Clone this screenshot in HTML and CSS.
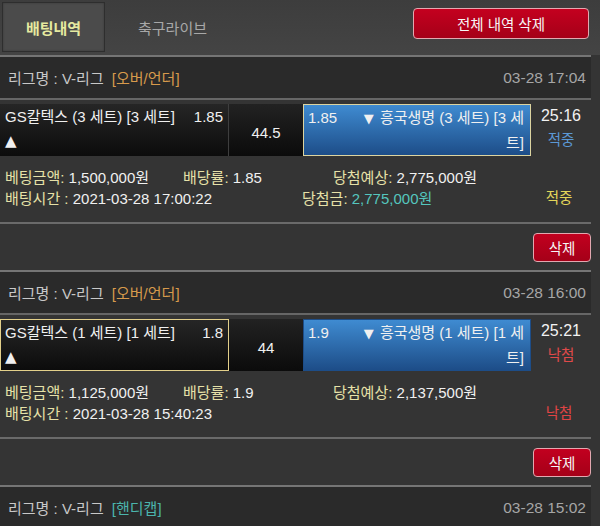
FILE: index.html
```html
<!DOCTYPE html>
<html lang="ko">
<head>
<meta charset="utf-8">
<title>배팅내역</title>
<link rel="stylesheet" href="styles.css">
</head>
<body>
<div class="page">
  <header class="top">
    <div class="tab tab-active">배팅내역</div>
    <div class="tab tab-idle">축구라이브</div>
    <button class="btn-all">전체 내역 삭제</button>
  </header>

  <div class="list">
    <section class="bet">
      <div class="league">
        <span class="league-name">리그명 : V-리그 <span class="tag tag-ou">[오버/언더]</span></span>
        <span class="date">03-28 17:04</span>
      </div>
      <div class="match">
        <div class="cell home">
          <div class="line"><span>GS칼텍스 (3 세트) [3 세트]</span><span>1.85</span></div>
          <div class="line"><span class="tri">▲</span></div>
        </div>
        <div class="cell mid">44.5</div>
        <div class="cell away pick">
          <div class="line"><span>1.85</span><span><span class="tri down">▼</span> 흥국생명 (3 세트) [3 세</span></div>
          <div class="line end"><span>트]</span></div>
        </div>
        <div class="cell status">
          <div class="time">25:16</div>
          <div class="res res-win">적중</div>
        </div>
      </div>
      <div class="info">
        <div class="row">
          <span class="c1"><b>베팅금액:</b> 1,500,000원</span>
          <span class="c2"><b>배당률:</b> 1.85</span>
          <span><b>당첨예상:</b> 2,775,000원</span>
        </div>
        <div class="row">
          <span class="c3"><b>배팅시간 :</b> 2021-03-28 17:00:22</span>
          <span><b>당첨금:</b> <span class="win-amt">2,775,000원</span></span>
          <span class="result result-win">적중</span>
        </div>
      </div>
      <div class="actions"><button class="btn-del">삭제</button></div>
    </section>

    <section class="bet">
      <div class="league">
        <span class="league-name">리그명 : V-리그 <span class="tag tag-ou">[오버/언더]</span></span>
        <span class="date">03-28 16:00</span>
      </div>
      <div class="match">
        <div class="cell home pick-sel">
          <div class="line"><span>GS칼텍스 (1 세트) [1 세트]</span><span>1.8</span></div>
          <div class="line"><span class="tri">▲</span></div>
        </div>
        <div class="cell mid">44</div>
        <div class="cell away">
          <div class="line"><span>1.9</span><span><span class="tri down">▼</span> 흥국생명 (1 세트) [1 세</span></div>
          <div class="line end"><span>트]</span></div>
        </div>
        <div class="cell status">
          <div class="time">25:21</div>
          <div class="res res-lose">낙첨</div>
        </div>
      </div>
      <div class="info">
        <div class="row">
          <span class="c1"><b>베팅금액:</b> 1,125,000원</span>
          <span class="c2"><b>배당률:</b> 1.9</span>
          <span><b>당첨예상:</b> 2,137,500원</span>
        </div>
        <div class="row">
          <span class="c3"><b>배팅시간 :</b> 2021-03-28 15:40:23</span>
          <span></span>
          <span class="result result-lose">낙첨</span>
        </div>
      </div>
      <div class="actions"><button class="btn-del">삭제</button></div>
    </section>

    <section class="bet">
      <div class="league">
        <span class="league-name">리그명 : V-리그 <span class="tag tag-hc">[핸디캡]</span></span>
        <span class="date">03-28 15:02</span>
      </div>
    </section>
  </div>
</div>
</body>
</html>
```

FILE: styles.css
```css
* { box-sizing: border-box; }
html, body {
  margin: 0;
  padding: 0;
  background: #343434;
  font-family: "Liberation Sans", "Noto Sans CJK KR", sans-serif;
  color: #f0f0f0;
  overflow: hidden;
}
.page { width: 600px; }

.top {
  height: 55px;
  display: flex;
  align-items: flex-start;
  background: linear-gradient(#3d3d3d, #444444);
}
.tab {
  height: 50px;
  display: flex;
  align-items: center;
  justify-content: center;
  font-size: 15px;
  margin-top: 2px;
}
.tab-active {
  width: 103px;
  margin-left: 2px;
  background: #4b4b4b;
  border: 1px solid #2e2e2e;
  color: #e6eaa0;
  font-weight: bold;
  box-shadow: inset 0 0 2px rgba(0,0,0,0.3);
}
.tab-idle {
  width: 135px;
  color: #a8a8a8;
}
.btn-all {
  margin-left: auto;
  margin-right: 11px;
  margin-top: 8px;
  width: 176px;
  height: 31px;
  background: linear-gradient(#c4001f, #a50018);
  border: 1px solid #e2a8b0;
  border-radius: 4px;
  color: #f6f6f6;
  font-family: inherit;
  font-size: 14.5px;
  padding: 0;
}

.list { width: 591px; }

.league {
  height: 45px;
  border-top: 2px solid #757575;
  border-bottom: 2px solid #666666;
  background: #2a2a2a;
  display: flex;
  align-items: center;
  justify-content: space-between;
  padding: 0 5px 0 8px;
  font-size: 15px;
  color: #c8c8c8;
}
.tag { margin-left: 4px; }
.tag-ou { color: #d79a4c; }
.tag-hc { color: #4bb5ad; }
.date { font-size: 15.5px; color: #a6a6a6; }

.match {
  display: flex;
  padding-top: 4px;
  height: 57px;
  font-size: 15px;
}
.cell { height: 52px; }
.home {
  width: 229px;
  padding: 0 5px;
  background: linear-gradient(#262626, #0c0c0c);
  border-right: 1px solid #3e3e3e;
}
.pick-sel { border: 1px solid #e3d08a; padding: 0 5px 0 4px; }
.mid {
  width: 74px;
  background: linear-gradient(#222222, #0b0b0b);
  display: flex;
  align-items: center;
  justify-content: center;
  padding-top: 5px;
}
.away {
  width: 228px;
  padding: 0 6px 0 4px;
  background: linear-gradient(#3f8bd1, #1d4d88);
  border: 1px solid #1d4d88;
}
.away.pick { border-color: #dcd4a0; }
.line {
  display: flex;
  justify-content: space-between;
  line-height: 25px;
  height: 25px;
  white-space: nowrap;
}
.line.end { justify-content: flex-end; }
.tri { font-family: "DejaVu Sans", sans-serif; font-size: 15px; }
.tri.down { font-size: 13px; margin-right: 2px; }
.status {
  width: 60px;
  text-align: center;
  line-height: 24px;
}
.time { font-size: 16px; color: #f2f2f2; }
.res { font-size: 14.5px; }
.res-win { color: #5b98d4; }
.res-lose { color: #e04a4a; }

.info {
  height: 67px;
  padding: 10px 0 0 5px;
  border-bottom: 2px solid #6a6a6a;
  font-size: 15px;
}
.info b { font-weight: normal; color: #e6e1a8; }
.row {
  display: flex;
  line-height: 21px;
  white-space: nowrap;
}
.c1 { width: 178px; }
.c2 { width: 150px; }
.c3 { width: 297px; }
.win-amt { color: #55c6be; }
.result {
  margin-left: auto;
  width: 60px;
  text-align: center;
  margin-right: 2px;
  font-size: 14.5px;
}
.result-win { color: #e3d65a; }
.result-lose { color: #e04444; }

.actions {
  height: 46px;
  display: flex;
  justify-content: flex-end;
  align-items: flex-start;
  padding-top: 9px;
}
.btn-del {
  width: 58px;
  height: 29px;
  padding: 0;
  background: linear-gradient(#c2001f, #a50018);
  border: 1px solid #e2a8b0;
  border-radius: 4px;
  color: #f6f6f6;
  font-family: inherit;
  font-size: 14.5px;
}
```
